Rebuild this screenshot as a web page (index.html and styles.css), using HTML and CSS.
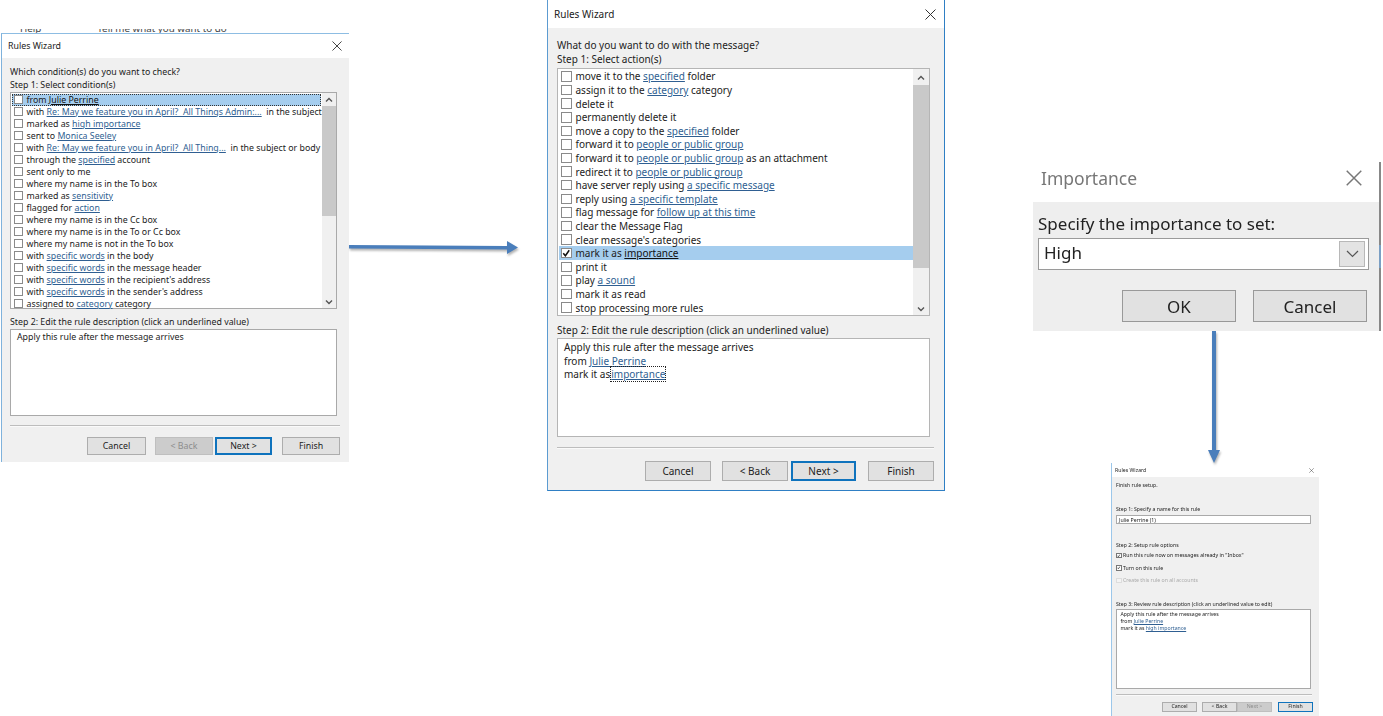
FILE: index.html
```html
<!DOCTYPE html>
<html>
<head>
    <meta charset="UTF-8" />
    <title>Rules Wizard steps</title>
    <link rel="stylesheet" href="styles.css">
</head>
<body>
    <svg width="0" height="0" class="defs">
        <symbol id="close" viewBox="0 0 11 11"><path d="M0.5 0.5 L10.5 10.5 M10.5 0.5 L0.5 10.5" fill="none" stroke="currentColor" stroke-width="1"/></symbol>
        <symbol id="up" viewBox="0 0 8 6"><path d="M1 4.5 L4 1.5 L7 4.5" fill="none" stroke="currentColor" stroke-width="1.4"/></symbol>
        <symbol id="down" viewBox="0 0 8 6"><path d="M1 1.5 L4 4.5 L7 1.5" fill="none" stroke="currentColor" stroke-width="1.4"/></symbol>
        <symbol id="chev" viewBox="0 0 13 8"><path d="M1 1 L6.5 6.5 L12 1" fill="none" stroke="currentColor" stroke-width="1.2"/></symbol>
        <symbol id="tick" viewBox="0 0 10 10"><path d="M1.5 5 L4 8 L8.5 1.5" fill="none" stroke="currentColor" stroke-width="1.8"/></symbol>
    </svg>

    <!-- ribbon text that shows above the first dialog -->
    <div class="behind"><span>Help</span><span>Tell me what you want to do</span></div>

    <!-- step 1: conditions -->
    <section class="window win-cond">
        <div class="titlebar">
            <span>Rules Wizard</span>
            <svg class="close"><use href="#close"/></svg>
        </div>
        <div class="panel">
            <div class="label">Which condition(s) do you want to check?</div>
            <div class="label">Step 1: Select condition(s)</div>
            <div class="listbox">
                <div class="rows">
                    <div class="row focused"><i class="check"></i><span>from <u>Julie Perrine</u></span></div>
                    <div class="row"><i class="check"></i><span>with <a>Re: May we feature you in April?&nbsp; All Things Admin:...</a>&nbsp; in the subject</span></div>
                    <div class="row"><i class="check"></i><span>marked as <a>high importance</a></span></div>
                    <div class="row"><i class="check"></i><span>sent to <a>Monica Seeley</a></span></div>
                    <div class="row"><i class="check"></i><span>with <a>Re: May we feature you in April?&nbsp; All Thing...</a>&nbsp; in the subject or body</span></div>
                    <div class="row"><i class="check"></i><span>through the <a>specified</a> account</span></div>
                    <div class="row"><i class="check"></i><span>sent only to me</span></div>
                    <div class="row"><i class="check"></i><span>where my name is in the To box</span></div>
                    <div class="row"><i class="check"></i><span>marked as <a>sensitivity</a></span></div>
                    <div class="row"><i class="check"></i><span>flagged for <a>action</a></span></div>
                    <div class="row"><i class="check"></i><span>where my name is in the Cc box</span></div>
                    <div class="row"><i class="check"></i><span>where my name is in the To or Cc box</span></div>
                    <div class="row"><i class="check"></i><span>where my name is not in the To box</span></div>
                    <div class="row"><i class="check"></i><span>with <a>specific words</a> in the body</span></div>
                    <div class="row"><i class="check"></i><span>with <a>specific words</a> in the message header</span></div>
                    <div class="row"><i class="check"></i><span>with <a>specific words</a> in the recipient's address</span></div>
                    <div class="row"><i class="check"></i><span>with <a>specific words</a> in the sender's address</span></div>
                    <div class="row"><i class="check"></i><span>assigned to <a>category</a> category</span></div>
                </div>
                <div class="scrollbar">
                    <svg class="arrow"><use href="#up"/></svg>
                    <div class="track"><div class="thumb"></div></div>
                    <svg class="arrow"><use href="#down"/></svg>
                </div>
            </div>
            <div class="label step2">Step 2: Edit the rule description (click an underlined value)</div>
            <div class="descbox">
                <div>Apply this rule after the message arrives</div>
            </div>
            <div class="sep"></div>
            <div class="buttons">
                <button class="btn b-cancel">Cancel</button>
                <button class="btn b-back disabled">&lt; Back</button>
                <button class="btn b-next primary">Next &gt;</button>
                <button class="btn b-finish">Finish</button>
            </div>
        </div>
    </section>

    <!-- step 2: actions -->
    <section class="window win-action">
        <div class="titlebar">
            <span>Rules Wizard</span>
            <svg class="close"><use href="#close"/></svg>
        </div>
        <div class="panel">
            <div class="label">What do you want to do with the message?</div>
            <div class="label">Step 1: Select action(s)</div>
            <div class="listbox">
                <div class="rows">
                    <div class="row"><i class="check"></i><span>move it to the <a>specified</a> folder</span></div>
                    <div class="row"><i class="check"></i><span>assign it to the <a>category</a> category</span></div>
                    <div class="row"><i class="check"></i><span>delete it</span></div>
                    <div class="row"><i class="check"></i><span>permanently delete it</span></div>
                    <div class="row"><i class="check"></i><span>move a copy to the <a>specified</a> folder</span></div>
                    <div class="row"><i class="check"></i><span>forward it to <a>people or public group</a></span></div>
                    <div class="row"><i class="check"></i><span>forward it to <a>people or public group</a> as an attachment</span></div>
                    <div class="row"><i class="check"></i><span>redirect it to <a>people or public group</a></span></div>
                    <div class="row"><i class="check"></i><span>have server reply using <a>a specific message</a></span></div>
                    <div class="row"><i class="check"></i><span>reply using <a>a specific template</a></span></div>
                    <div class="row"><i class="check"></i><span>flag message for <a>follow up at this time</a></span></div>
                    <div class="row"><i class="check"></i><span>clear the Message Flag</span></div>
                    <div class="row"><i class="check"></i><span>clear message's categories</span></div>
                    <div class="row selected"><i class="check"><svg><use href="#tick"/></svg></i><span>mark it as <u>importance</u></span></div>
                    <div class="row"><i class="check"></i><span>print it</span></div>
                    <div class="row"><i class="check"></i><span>play <a>a sound</a></span></div>
                    <div class="row"><i class="check"></i><span>mark it as read</span></div>
                    <div class="row"><i class="check"></i><span>stop processing more rules</span></div>
                </div>
                <div class="scrollbar">
                    <svg class="arrow"><use href="#up"/></svg>
                    <div class="track"><div class="thumb"></div></div>
                    <svg class="arrow"><use href="#down"/></svg>
                </div>
            </div>
            <div class="label step2">Step 2: Edit the rule description (click an underlined value)</div>
            <div class="descbox">
                <div>Apply this rule after the message arrives</div>
                <div>from <a>Julie Perrine</a></div>
                <div>mark it as<a class="dotted">importance</a></div>
            </div>
            <div class="sep"></div>
            <div class="buttons">
                <button class="btn b-cancel">Cancel</button>
                <button class="btn b-back">&lt; Back</button>
                <button class="btn b-next primary">Next &gt;</button>
                <button class="btn b-finish">Finish</button>
            </div>
        </div>
    </section>

    <!-- importance picker -->
    <section class="window win-imp">
        <div class="titlebar">
            <span>Importance</span>
            <svg class="close"><use href="#close"/></svg>
        </div>
        <div class="panel">
            <div class="label">Specify the importance to set:</div>
            <div class="combo">
                <span>High</span>
                <span class="combo-btn"><svg><use href="#chev"/></svg></span>
            </div>
            <div class="buttons">
                <button class="btn">OK</button>
                <button class="btn">Cancel</button>
            </div>
        </div>
    </section>
    <div class="edge-mark"></div>

    <!-- step 3: finish -->
    <section class="window win-finish">
        <div class="titlebar">
            <span>Rules Wizard</span>
            <svg class="close"><use href="#close"/></svg>
        </div>
        <div class="panel">
            <div class="label">Finish rule setup.</div>
            <div class="label f-step1">Step 1: Specify a name for this rule</div>
            <div class="name-input">Julie Perrine (1)</div>
            <div class="label f-step2">Step 2: Setup rule options</div>
            <div class="opt"><i class="check"><svg><use href="#tick"/></svg></i><span>Run this rule now on messages already in "Inbox"</span></div>
            <div class="opt"><i class="check"><svg><use href="#tick"/></svg></i><span>Turn on this rule</span></div>
            <div class="opt off"><i class="check"></i><span>Create this rule on all accounts</span></div>
            <div class="label f-step3">Step 3: Review rule description (click an underlined value to edit)</div>
            <div class="descbox">
                <div>Apply this rule after the message arrives</div>
                <div>from <a>Julie Perrine</a></div>
                <div>mark it as <a>high importance</a></div>
            </div>
            <div class="sep"></div>
            <div class="buttons">
                <button class="btn b-cancel">Cancel</button>
                <button class="btn b-back">&lt; Back</button>
                <button class="btn b-next disabled">Next &gt;</button>
                <button class="btn b-finish primary">Finish</button>
            </div>
        </div>
    </section>

    <!-- arrows between the dialogs -->
    <svg class="flow flow-h" viewBox="0 0 172 18">
        <path d="M0 6 L158 7 L158 2 L169 8.5 L158 15 L158 10.5 L0 9.5 Z" fill="#4a7ebb"/>
    </svg>
    <svg class="flow flow-v" viewBox="0 0 14 133">
        <path d="M5 0 L9 0 L9 119 L13 119 L7 132 L1 119 L5 119 Z" fill="#4a7ebb"/>
    </svg>
</body>
</html>
```

FILE: styles.css
```css
* {
    margin: 0;
    padding: 0;
    box-sizing: border-box;
}
html, body {
    width: 1383px;
    height: 716px;
    overflow: hidden;
    background: #fff;
}
body {
    position: relative;
    font-family: "Noto Sans", "Open Sans", sans-serif;
    color: #222;
}
.defs {
    position: absolute;
}
a {
    color: #2f5f92;
    text-decoration: underline;
}
u {
    color: #111;
}

/* only the lower half of this line is visible in the shot */
.behind {
    position: absolute;
    left: 20px;
    top: 29px;
    width: 210px;
    height: 4px;
    overflow: hidden;
    display: flex;
    gap: 56px;
    font-size: 9.8px;
    line-height: 0;
    color: #444;
}

/* dialogs sit on a free canvas */
.window {
    position: absolute;
    display: flex;
    flex-direction: column;
    background: #fff;
}
.titlebar {
    display: flex;
    align-items: center;
    justify-content: space-between;
    flex: none;
}
.close {
    flex: none;
    color: #333;
}
.panel {
    flex: 1;
    background: #f0f0f0;
    display: flex;
    flex-direction: column;
    align-items: flex-start;
}
.label {
    white-space: nowrap;
}
.listbox {
    display: flex;
    background: #fff;
    border: 1px solid #a9a9a9;
}
.rows {
    flex: 1;
    min-width: 0;
}
.row {
    display: flex;
    align-items: center;
    white-space: nowrap;
}
.check {
    flex: none;
    display: block;
    background: #fff;
    border: 1px solid #8a8a8a;
    color: #111;
}
.check svg {
    display: block;
    width: 100%;
    height: 100%;
}
.scrollbar {
    flex: none;
    display: flex;
    flex-direction: column;
    align-items: center;
    background: #f0f0f0;
    color: #555;
}
.arrow {
    flex: none;
    width: 8px;
    height: 6px;
}
.track {
    flex: 1;
    width: 100%;
}
.thumb {
    background: #c9c9c9;
}
.descbox {
    background: #fff;
    border: 1px solid #a9a9a9;
    white-space: nowrap;
}
.sep {
    height: 1px;
    background: #bdbdbd;
    box-shadow: 0 1px 0 #fafafa;
}
.buttons {
    display: flex;
    justify-content: flex-end;
}
.btn {
    font: inherit;
    color: #222;
    background: #e1e1e1;
    border: 1px solid #adadad;
}
.btn.primary {
    border: 2px solid #0f73bd;
}
.btn.disabled {
    background: #cccccc;
    border-color: #bfbfbf;
    color: #8c8c8c;
}

/* first wizard page */
.win-cond {
    left: 1px;
    top: 33px;
    width: 348px;
    height: 429px;
    border-left: 1px solid #7fb2dc;
    border-top: 1px solid #8dbde3;
    font-size: 8.8px;
}
.win-cond .titlebar {
    height: 24px;
    padding: 0 7px 1px 6px;
}
.win-cond .close {
    width: 10px;
    height: 10px;
}
.win-cond .panel {
    padding: 8px 8px 0;
}
.win-cond .label {
    line-height: 13px;
}
.win-cond .listbox {
    width: 327px;
    height: 217px;
}
.win-cond .rows {
    padding: 0.5px 1px 0;
}
.win-cond .row {
    height: 12px;
    padding-left: 2px;
    gap: 3.5px;
}
.win-cond .row.focused {
    background: #a5cdee;
    outline: 1px dotted #333;
    outline-offset: -1px;
}
.win-cond .check {
    width: 9px;
    height: 9px;
}
.win-cond .scrollbar {
    width: 14px;
    padding: 4px 0 3px;
}
.win-cond .track {
    margin: 3px 0;
}
.win-cond .thumb {
    height: 110px;
}
.win-cond .step2 {
    margin-top: 7px;
}
.win-cond .descbox {
    width: 327px;
    height: 87px;
    padding: 1px 6px;
    line-height: 13px;
}
.win-cond .sep {
    width: 330px;
    margin-top: 9px;
}
.win-cond .buttons {
    width: 330px;
    height: 18px;
    margin-top: 11px;
}
.win-cond .b-cancel { width: 59px; margin-right: 9px; }
.win-cond .b-back { width: 58px; margin-right: 2px; }
.win-cond .b-next { width: 57px; margin-right: 10px; }
.win-cond .b-finish { width: 58px; }

/* second wizard page */
.win-action {
    left: 547px;
    top: 0;
    width: 398px;
    height: 491px;
    border-left: 1px solid #5c9bd1;
    border-right: 1px solid #2f7fc4;
    border-bottom: 1px solid #2f7fc4;
    font-size: 10px;
}
.win-action .titlebar {
    height: 28px;
    padding: 0 8px 0 6px;
}
.win-action .close {
    width: 11px;
    height: 11px;
}
.win-action .panel {
    padding: 10px 9px 0 9px;
}
.win-action .label {
    line-height: 14px;
}
.win-action .listbox {
    width: 373px;
    height: 248px;
    margin-top: 2px;
    border-color: #b5b5b5;
}
.win-action .rows {
    padding: 0.7px 0 0 1px;
}
.win-action .row {
    height: 13.6px;
    padding-left: 2px;
    gap: 4px;
}
.win-action .row.selected {
    background: #a5cdee;
}
.win-action .check {
    width: 10.5px;
    height: 10.5px;
}
.win-action .scrollbar {
    width: 16px;
    padding: 6px 0 3px;
}
.win-action .track {
    margin: 4px 0;
}
.win-action .thumb {
    height: 183px;
}
.win-action .step2 {
    margin-top: 6.5px;
}
.win-action .descbox {
    width: 373px;
    height: 99px;
    margin-top: 1px;
    padding: 2.5px 6px;
    line-height: 13.5px;
    border-color: #b5b5b5;
}
.win-action .dotted {
    outline: 1px dotted #222;
    margin-left: 1px;
}
.win-action .sep {
    width: 377px;
    margin-top: 10px;
}
.win-action .buttons {
    width: 377px;
    height: 20px;
    margin-top: 13px;
}
.win-action .b-cancel { width: 66px; margin-right: 11px; }
.win-action .b-back { width: 66px; margin-right: 3px; }
.win-action .b-next { width: 65px; margin-right: 12px; }
.win-action .b-finish { width: 66px; }

/* zoomed importance dialog */
.win-imp {
    left: 1033px;
    top: 160px;
    width: 346px;
    height: 171px;
    font-size: 17px;
    filter: blur(0.4px);
}
.win-imp .titlebar {
    height: 42px;
    padding: 0 17px 6px 8px;
    color: #777;
    font-size: 17.5px;
}
.win-imp .close {
    width: 16px;
    height: 16px;
    color: #777;
}
.win-imp .panel {
    padding: 11px 0 0 5px;
    background: #eeeeee;
}
.win-imp .label {
    line-height: 22px;
}
.combo {
    display: flex;
    align-items: center;
    justify-content: space-between;
    width: 331px;
    height: 32px;
    margin-top: 3px;
    padding: 0 3px 0 5px;
    background: #fff;
    border: 1px solid #9a9a9a;
}
.combo > span:first-child {
    margin-top: -3px;
}
.combo-btn {
    display: flex;
    align-items: center;
    justify-content: center;
    width: 26px;
    height: 26px;
    background: #e3e3e3;
    border: 1px solid #b8b8b8;
    color: #555;
}
.combo-btn svg {
    width: 13px;
    height: 8px;
}
.win-imp .buttons {
    width: 329px;
    height: 32px;
    margin-top: 20px;
    gap: 17px;
}
.win-imp .btn {
    width: 114px;
    border-width: 1.5px;
    border-color: #999;
}
.edge-mark {
    position: absolute;
    left: 1379px;
    top: 162px;
    width: 2px;
    height: 169px;
    background: linear-gradient(#888 0, #888 83px, #7b9fc4 83px, #7b9fc4 106px, #888 106px);
}

/* small finish page */
.win-finish {
    left: 1111px;
    top: 463px;
    width: 208px;
    height: 253px;
    border-left: 1.5px solid #9cc7ea;
    font-size: 5.2px;
    filter: blur(0.3px);
}
.win-finish .titlebar {
    height: 14px;
    padding: 0 5px 0 3px;
}
.win-finish .close {
    width: 5px;
    height: 5px;
}
.win-finish .panel {
    padding: 5px 0 0 4px;
}
.win-finish .label {
    line-height: 7px;
}
.win-finish .f-step1 {
    margin-top: 17px;
}
.name-input {
    width: 195px;
    height: 9px;
    margin-top: 2px;
    padding-left: 2px;
    line-height: 8px;
    background: #fff;
    border: 0.5px solid #aaa;
}
.win-finish .f-step2 {
    margin-top: 18px;
}
.opt {
    display: flex;
    align-items: center;
    gap: 1.5px;
    height: 12.5px;
}
.opt.off {
    color: #aaa;
}
.win-finish .check {
    width: 5.5px;
    height: 5.5px;
    border-width: 0.5px;
    border-color: #777;
}
.win-finish .opt.off .check {
    border-color: #ddd;
    background: #f4f4f4;
}
.win-finish .f-step3 {
    margin-top: 14.5px;
}
.win-finish .descbox {
    width: 195px;
    height: 80px;
    margin-top: 1px;
    padding: 1px 3.5px;
    line-height: 7px;
    border-width: 0.5px;
}
.win-finish .sep {
    width: 196px;
    margin-top: 5px;
}
.win-finish .buttons {
    width: 197px;
    height: 10px;
    margin-top: 7px;
    line-height: 1;
}
.win-finish .btn {
    border-width: 0.5px;
}
.win-finish .btn.primary {
    border-width: 1px;
}
.win-finish .b-cancel { width: 35px; margin-right: 5px; }
.win-finish .b-back { width: 35px; margin-right: 0; }
.win-finish .b-next { width: 35px; margin-right: 6px; }
.win-finish .b-finish { width: 35px; }

/* connector arrows */
.flow {
    position: absolute;
    overflow: visible;
    filter: drop-shadow(1px 2px 1px rgba(0,0,0,0.3));
}
.flow-h {
    left: 349px;
    top: 239px;
    width: 172px;
    height: 18px;
}
.flow-v {
    left: 1207px;
    top: 331px;
    width: 14px;
    height: 133px;
}
```
